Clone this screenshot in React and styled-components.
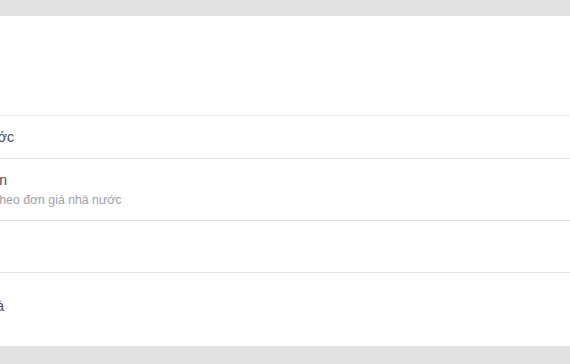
import React from 'react';
import styled, { createGlobalStyle } from 'styled-components';

const GlobalStyle = createGlobalStyle`
  html, body {
    margin: 0;
    padding: 0;
    background: #e2e2e2;
  }
  body {
    font-family: "Liberation Sans", Arial, sans-serif;
    -webkit-font-smoothing: antialiased;
  }
`;

const Page = styled.div`
  height: 364px;
  padding-top: 16px;
  box-sizing: border-box;
  overflow: hidden;
  background: #e2e2e2;
`;

// the card is wider than the window: its left part lies off screen
const Card = styled.div`
  margin-left: -66px;
  margin-right: -40px;
  background: #ffffff;
  padding-bottom: 7px;
`;

const Header = styled.div`
  height: 99px;
  border-bottom: 1px solid #e7e6ee;
`;

const Row = styled.div`
  display: flex;
  flex-direction: column;
  justify-content: center;
  box-sizing: border-box;
  min-height: ${(p) => p.$height}px;
  padding: 0 16px;
  border-bottom: ${(p) => (p.$last ? 'none' : '1px solid #e5e4ee')};
`;

const Title = styled.div`
  font-size: 14px;
  line-height: 18px;
  color: #4a4a5c;
  white-space: nowrap;
`;

const Subtitle = styled.div`
  margin-top: 3px;
  font-size: 12.3px;
  line-height: 16px;
  color: #a0a0ad;
  white-space: nowrap;
`;

const settings = [
  { title: 'Tiền nước', height: 43 },
  { title: 'Tiền điện', subtitle: 'Phí tính theo đơn giá nhà nước', height: 62 },
  { title: '', height: 52 },
  { title: 'Tiền nhà', height: 66, last: true },
];

const App = () => {
  return (
    <Page>
      <GlobalStyle />
      <Card>
        <Header />
        {settings.map((s, i) => (
          <Row key={i} $height={s.height} $last={s.last}>
            {s.title && <Title>{s.title}</Title>}
            {s.subtitle && <Subtitle>{s.subtitle}</Subtitle>}
          </Row>
        ))}
      </Card>
    </Page>
  );
};

export default App;
